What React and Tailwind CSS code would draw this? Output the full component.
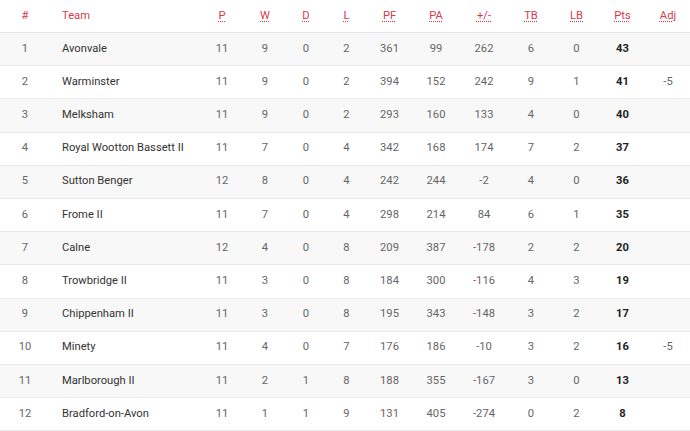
const teams = [
  { pos: 1, name: "Avonvale", p: 11, w: 9, d: 0, l: 2, pf: 361, pa: 99, diff: 262, tb: 6, lb: 0, pts: 43, adj: "" },
  { pos: 2, name: "Warminster", p: 11, w: 9, d: 0, l: 2, pf: 394, pa: 152, diff: 242, tb: 9, lb: 1, pts: 41, adj: "-5" },
  { pos: 3, name: "Melksham", p: 11, w: 9, d: 0, l: 2, pf: 293, pa: 160, diff: 133, tb: 4, lb: 0, pts: 40, adj: "" },
  { pos: 4, name: "Royal Wootton Bassett II", p: 11, w: 7, d: 0, l: 4, pf: 342, pa: 168, diff: 174, tb: 7, lb: 2, pts: 37, adj: "" },
  { pos: 5, name: "Sutton Benger", p: 12, w: 8, d: 0, l: 4, pf: 242, pa: 244, diff: -2, tb: 4, lb: 0, pts: 36, adj: "" },
  { pos: 6, name: "Frome II", p: 11, w: 7, d: 0, l: 4, pf: 298, pa: 214, diff: 84, tb: 6, lb: 1, pts: 35, adj: "" },
  { pos: 7, name: "Calne", p: 12, w: 4, d: 0, l: 8, pf: 209, pa: 387, diff: -178, tb: 2, lb: 2, pts: 20, adj: "" },
  { pos: 8, name: "Trowbridge II", p: 11, w: 3, d: 0, l: 8, pf: 184, pa: 300, diff: -116, tb: 4, lb: 3, pts: 19, adj: "" },
  { pos: 9, name: "Chippenham II", p: 11, w: 3, d: 0, l: 8, pf: 195, pa: 343, diff: -148, tb: 3, lb: 2, pts: 17, adj: "" },
  { pos: 10, name: "Minety", p: 11, w: 4, d: 0, l: 7, pf: 176, pa: 186, diff: -10, tb: 3, lb: 2, pts: 16, adj: "-5" },
  { pos: 11, name: "Marlborough II", p: 11, w: 2, d: 1, l: 8, pf: 188, pa: 355, diff: -167, tb: 3, lb: 0, pts: 13, adj: "" },
  { pos: 12, name: "Bradford-on-Avon", p: 11, w: 1, d: 1, l: 9, pf: 131, pa: 405, diff: -274, tb: 0, lb: 2, pts: 8, adj: "" },
];

const headers = ["P", "W", "D", "L", "PF", "PA", "+/-", "TB", "LB", "Pts", "Adj"];

const grid = "grid grid-cols-[50px_150px_44px_42px_40px_41px_45px_48px_48px_46px_45px_47px_44px] items-center";

const App = () => {
  return (
    <div className="w-[690px] h-[431px] overflow-hidden bg-white font-['Roboto',sans-serif] text-[11.2px]">
      {/* header */}
      <div className={`${grid} h-[33px] border-b border-[#e6e6e6] text-[#d83a50]`}>
        <div className="text-center">#</div>
        <div className="pl-3">Team</div>
        {headers.map((h) => (
          <div key={h} className="text-center">
            <span className="underline decoration-dotted underline-offset-2">{h}</span>
          </div>
        ))}
      </div>

      {/* rows */}
      {teams.map((t, i) => (
        <div
          key={t.pos}
          className={`${grid} h-[33.2px] border-b border-[#e9e9e9] text-[#666] ${i % 2 === 0 ? "bg-[#f8f8f8]" : "bg-white"}`}
        >
          <div className="text-center">{t.pos}</div>
          <div className="pl-3 text-[#333]">{t.name}</div>
          <div className="text-center">{t.p}</div>
          <div className="text-center">{t.w}</div>
          <div className="text-center">{t.d}</div>
          <div className="text-center">{t.l}</div>
          <div className="text-center">{t.pf}</div>
          <div className="text-center">{t.pa}</div>
          <div className="text-center">{t.diff}</div>
          <div className="text-center">{t.tb}</div>
          <div className="text-center">{t.lb}</div>
          <div className="text-center font-bold text-[#222]">{t.pts}</div>
          <div className="text-center">{t.adj}</div>
        </div>
      ))}
    </div>
  );
};

export default App;
